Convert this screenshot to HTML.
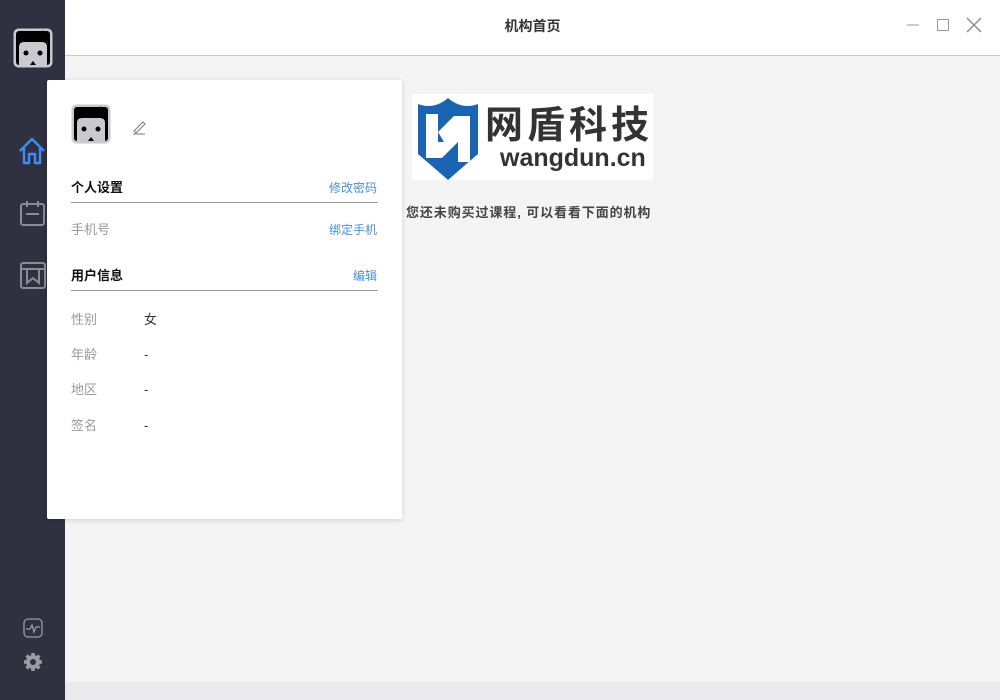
<!DOCTYPE html>
<html><head><meta charset="utf-8"><style>
*{margin:0;padding:0;box-sizing:border-box}
body{width:1000px;height:700px;overflow:hidden;font-family:"Liberation Sans","Noto Sans CJK SC",sans-serif;background:#f4f4f5;position:relative;font-size:13px}
.side{position:absolute;left:0;top:0;width:65px;height:700px;background:#2f3040}
.top{position:absolute;left:65px;top:0;right:0;height:56px;background:#fff;border-bottom:1px solid #c8c8c8}
.title{position:absolute;left:0;right:0;top:17px;text-align:center;font-size:14px;color:#333;font-weight:bold;line-height:18px}
.bottom{position:absolute;left:65px;right:0;top:682px;height:18px;background:#e9e9ee}
.panel{position:absolute;left:47px;top:80px;width:355px;height:439px;background:#fff;box-shadow:0 1px 6px rgba(0,0,0,.15);border-radius:2px}
.abs{position:absolute;line-height:16px}
.h{font-weight:bold;color:#111;font-size:13px}
.lnk{color:#4a8fd8;font-size:12px}
.g{color:#999;font-size:13px}
.line{position:absolute;left:24px;width:307px;height:1px;background:#999}
</style></head><body>
<div class="side">
<svg class="abs" style="left:13px;top:28px" width="40" height="40" viewBox="0 0 40 40"><rect x="0.5" y="0.5" width="39" height="39" rx="5" fill="#c9cad0"/><rect x="3" y="3" width="34" height="34" rx="3" fill="#000"/><path d="M6 37 V19 Q6 14 11 14 H29 Q34 14 34 19 V37 Z" fill="#c9cad0"/><circle cx="13" cy="25" r="2.5" fill="#000"/><circle cx="27" cy="25" r="2.5" fill="#000"/><path d="M17 37 L20 33 L23 37" fill="#000"/><path d="M22 10 L30 2 L28 10 Z" fill="#000"/></svg>
<svg class="abs" style="left:17px;top:136px" width="30" height="30" viewBox="0 0 30 30" fill="none" stroke="#3d8ef5" stroke-width="2.4" stroke-linejoin="round"><path d="M3 15 L15 3 L27 15 M7 12 V27 H12 V18 H18 V27 H23 V12"/></svg>
<svg class="abs" style="left:19px;top:200px" width="27" height="27" viewBox="0 0 27 27" fill="none" stroke="#8a8b95" stroke-width="2"><rect x="2" y="4" width="23" height="21" rx="2"/><path d="M8 1 V7 M19 1 V7 M7 14 H20"/></svg>
<svg class="abs" style="left:19px;top:261px" width="28" height="29" viewBox="0 0 28 29" fill="none" stroke="#8a8b95" stroke-width="2"><rect x="2" y="2" width="24" height="25" rx="2"/><path d="M2 8 H26 M8 8 V22 L14 17 L20 22 V8"/></svg>
<svg class="abs" style="left:23px;top:618px" width="20" height="20" viewBox="0 0 20 20" fill="none" stroke="#9a9ba5" stroke-width="1.3"><rect x="1" y="1" width="18" height="18" rx="4"/><path d="M3 11 H7 L9 7 L11 14 L13 9 L17 9"/></svg>
<svg class="abs" style="left:23px;top:652px" width="20" height="20" viewBox="0 0 20 20"><circle cx="10" cy="10" r="7" fill="#9a9ba5"/><g stroke="#9a9ba5" stroke-width="3.5"><path d="M10 1V19M1 10H19M3.6 3.6L16.4 16.4M16.4 3.6L3.6 16.4"/></g><circle cx="10" cy="10" r="3" fill="#2f3040"/></svg>
</div>
<div class="top"><div class="title">机构首页</div>
<svg class="abs" style="right:80px;top:18px" width="14" height="14"><path d="M1 7H13" stroke="#999" stroke-width="1"/></svg>
<svg class="abs" style="right:50px;top:18px" width="14" height="14"><rect x="1.5" y="1.5" width="11" height="11" fill="none" stroke="#999"/></svg>
<svg class="abs" style="right:18px;top:17px" width="16" height="16"><path d="M1 1L15 15M15 1L1 15" stroke="#888" stroke-width="1.3"/></svg>
</div>
<div class="abs" style="left:412px;top:94px;width:241px;height:86px;background:#fff">
<svg class="abs" style="left:2px;top:2px" width="68" height="84" viewBox="0 0 68 84"><path d="M4 8 Q20 14 34 2 Q48 14 64 8 V58 Q50 70 34 84 Q18 70 4 58 Z" fill="#1a64b3"/><path d="M12 18 H24 V36 L40 20 H56 V66 H44 V46 L28 62 H12 Z" fill="#fff"/><path d="M24 36 V46 H30 Z" fill="#1a64b3"/></svg>
<div class="abs" style="left:73px;top:12px;font-size:38px;font-weight:bold;color:#333;letter-spacing:4px;line-height:40px;white-space:nowrap">网盾科技</div>
<div class="abs" style="left:88px;top:50px;font-size:25px;font-weight:bold;color:#333;line-height:28px">wangdun.cn</div>
</div>
<div class="abs" style="left:406px;top:205px;font-size:13px;font-weight:bold;color:#444;letter-spacing:0.9px;white-space:nowrap">您还未购买过课程, 可以看看下面的机构</div>
<div class="panel">
<svg class="abs" style="left:24px;top:24px" width="40" height="40" viewBox="0 0 40 40"><rect x="0.5" y="0.5" width="39" height="39" rx="5" fill="#c9cad0"/><rect x="3" y="3" width="34" height="34" rx="3" fill="#000"/><path d="M6 37 V19 Q6 14 11 14 H29 Q34 14 34 19 V37 Z" fill="#c9cad0"/><circle cx="13" cy="25" r="2.5" fill="#000"/><circle cx="27" cy="25" r="2.5" fill="#000"/><path d="M17 37 L20 33 L23 37" fill="#000"/><path d="M22 10 L30 2 L28 10 Z" fill="#000"/></svg>
<svg class="abs" style="left:84px;top:39px" width="16" height="16" viewBox="0 0 16 16" fill="none" stroke="#777" stroke-width="1"><path d="M3 12 L12 3 L14 5 L5 14 Z M2 15 H14"/></svg>
<div class="abs h" style="left:24px;top:100px">个人设置</div>
<div class="abs lnk" style="right:25px;top:100px">修改密码</div>
<div class="line" style="top:122px"></div>
<div class="abs g" style="left:24px;top:142px">手机号</div>
<div class="abs lnk" style="right:25px;top:142px">绑定手机</div>
<div class="abs h" style="left:24px;top:188px">用户信息</div>
<div class="abs lnk" style="right:25px;top:188px">编辑</div>
<div class="line" style="top:210px"></div>
<div class="abs g" style="left:24px;top:232px">性别</div><div class="abs" style="left:97px;top:232px;color:#333">女</div>
<div class="abs g" style="left:24px;top:267px">年龄</div><div class="abs" style="left:97px;top:267px;color:#333">-</div>
<div class="abs g" style="left:24px;top:302px">地区</div><div class="abs" style="left:97px;top:302px;color:#333">-</div>
<div class="abs g" style="left:24px;top:338px">签名</div><div class="abs" style="left:97px;top:338px;color:#333">-</div>
</div>
<div class="bottom"></div>
</body></html>
